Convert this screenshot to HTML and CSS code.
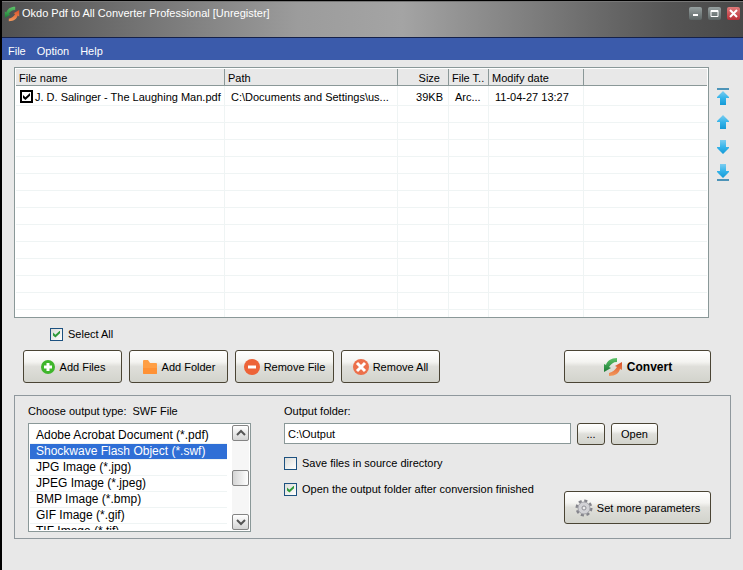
FILE: index.html
```html
<!DOCTYPE html>
<html lang="en">
<head>
  <meta charset="UTF-8">
  <title>Okdo Pdf to All Converter Professional</title>
  <link rel="stylesheet" href="styles.css">
</head>
<body>
  <!-- shared icons -->
  <svg class="defs" width="0" height="0">
    <defs>
      <linearGradient id="green" x1="0" y1="0" x2="0" y2="1">
        <stop offset="0" stop-color="#5cc468"/>
        <stop offset="1" stop-color="#1b7a35"/>
      </linearGradient>
      <linearGradient id="orange" x1="0" y1="0" x2="0" y2="1">
        <stop offset="0" stop-color="#d9502a"/>
        <stop offset="1" stop-color="#f39a5c"/>
      </linearGradient>
      <linearGradient id="blue" x1="0" y1="0" x2="0" y2="1">
        <stop offset="0" stop-color="#7ccdf0"/>
        <stop offset="0.5" stop-color="#35b4ea"/>
        <stop offset="1" stop-color="#159ad6"/>
      </linearGradient>
      <symbol id="swap" viewBox="0 0 20 20">
        <path d="M14 1 C8 1 4 4 3 8 L1 7 L1 15 L8 11 L6 10 C8 7 10 5 14 5 Z" fill="url(#green)"/>
        <path d="M6 19 C13 19 16 16 17 12 L19 13 L19 5 L12 9 L14 10 C12 13 10 15 6 16 Z" fill="url(#orange)"/>
      </symbol>
      <symbol id="up" viewBox="0 0 14 16">
        <path d="M7 1 L13 7 V8 H10 V15 H4 V8 H1 V7 Z" fill="url(#blue)"/>
      </symbol>
      <symbol id="down" viewBox="0 0 14 16">
        <path d="M7 15 L13 9 V8 H10 V1 H4 V8 H1 V9 Z" fill="url(#blue)"/>
      </symbol>
    </defs>
  </svg>

  <div class="window">
    <header class="titlebar">
      <svg class="logo" width="16" height="16"><use href="#swap"/></svg>
      <h1>Okdo Pdf to All Converter Professional [Unregister]</h1>
      <div class="controls">
        <button aria-label="Minimize"><svg width="13" height="13"><path d="M4 8h5" stroke="#fff" stroke-width="2"/></svg></button>
        <button aria-label="Maximize"><svg width="13" height="13"><path d="M3 3.5h7v6h-7z" fill="none" stroke="#fff"/><path d="M3 4h7" stroke="#fff" stroke-width="2"/></svg></button>
        <button class="close" aria-label="Close"><svg width="13" height="13"><path d="M3 3l7 7M10 3l-7 7" stroke="#fff" stroke-width="2"/></svg></button>
      </div>
    </header>

    <nav class="menu">
      <a href="#">File</a>
      <a href="#">Option</a>
      <a href="#">Help</a>
    </nav>

    <main>
      <div class="files">
        <div class="file-list">
          <table>
            <colgroup>
              <col class="c-name"><col class="c-path"><col class="c-size"><col class="c-type"><col class="c-date"><col>
            </colgroup>
            <thead>
              <tr><th>File name</th><th>Path</th><th class="num">Size</th><th>File T..</th><th>Modify date</th><th></th></tr>
            </thead>
            <tbody>
              <tr>
                <td><label class="row-check"><input type="checkbox" checked>J. D. Salinger - The Laughing Man.pdf</label></td>
                <td>C:\Documents and Settings\us...</td>
                <td class="num">39KB</td>
                <td>Arc...</td>
                <td>11-04-27 13:27</td>
                <td></td>
              </tr>
              <tr><td></td><td></td><td></td><td></td><td></td><td></td></tr>
              <tr><td></td><td></td><td></td><td></td><td></td><td></td></tr>
              <tr><td></td><td></td><td></td><td></td><td></td><td></td></tr>
              <tr><td></td><td></td><td></td><td></td><td></td><td></td></tr>
              <tr><td></td><td></td><td></td><td></td><td></td><td></td></tr>
              <tr><td></td><td></td><td></td><td></td><td></td><td></td></tr>
              <tr><td></td><td></td><td></td><td></td><td></td><td></td></tr>
              <tr><td></td><td></td><td></td><td></td><td></td><td></td></tr>
              <tr><td></td><td></td><td></td><td></td><td></td><td></td></tr>
              <tr><td></td><td></td><td></td><td></td><td></td><td></td></tr>
              <tr><td></td><td></td><td></td><td></td><td></td><td></td></tr>
              <tr><td></td><td></td><td></td><td></td><td></td><td></td></tr>
              <tr><td></td><td></td><td></td><td></td><td></td><td></td></tr>
            </tbody>
          </table>
        </div>
        <div class="order">
          <button aria-label="Move to top"><svg width="14" height="18"><path d="M1 1h12" stroke="#4d94b8" stroke-width="2"/><use href="#up" y="2" width="14" height="16"/></svg></button>
          <button aria-label="Move up"><svg width="14" height="18"><use href="#up" y="1" width="14" height="16"/></svg></button>
          <button aria-label="Move down"><svg width="14" height="18"><use href="#down" y="1" width="14" height="16"/></svg></button>
          <button aria-label="Move to bottom"><svg width="14" height="18"><path d="M1 17h12" stroke="#4d94b8" stroke-width="2"/><use href="#down" width="14" height="16"/></svg></button>
        </div>
      </div>

      <label class="check select-all"><input type="checkbox" checked>Select All</label>

      <div class="actions">
        <button class="btn">
          <svg width="16" height="16"><circle cx="8" cy="8" r="7" fill="#3fb62c"/><path d="M8 4v8M4 8h8" stroke="#fff" stroke-width="3"/></svg>
          Add Files
        </button>
        <button class="btn">
          <svg width="16" height="16"><path d="M1 2q0-1 1-1h4l2 3h6q1 0 1 1v9q0 1-1 1h-12q-1 0-1-1z" fill="#ff9f45"/><path d="M1 9h14v5q0 1-1 1h-12q-1 0-1-1z" fill="#ff9236"/></svg>
          Add Folder
        </button>
        <button class="btn">
          <svg width="16" height="16"><circle cx="8" cy="8" r="8" fill="#ed6338"/><path d="M4 8h8" stroke="#fff" stroke-width="3"/></svg>
          Remove File
        </button>
        <button class="btn">
          <svg width="16" height="16"><circle cx="8" cy="8" r="8" fill="#ec704b"/><path d="M4 4l8 8M12 4l-8 8" stroke="#fff" stroke-width="3"/></svg>
          Remove All
        </button>
        <button class="btn wide convert">
          <svg width="20" height="20"><use href="#swap"/></svg>
          Convert
        </button>
      </div>

      <section class="output">
        <div class="types">
          <label for="type">Choose output type: <span>SWF File</span></label>
          <div class="listbox">
            <select id="type" size="7">
              <option>Adobe Acrobat Document (*.pdf)</option>
              <option selected>Shockwave Flash Object (*.swf)</option>
              <option>JPG Image (*.jpg)</option>
              <option>JPEG Image (*.jpeg)</option>
              <option>BMP Image (*.bmp)</option>
              <option>GIF Image (*.gif)</option>
              <option>TIF Image (*.tif)</option>
            </select>
            <div class="scroll">
              <button aria-label="Scroll up"><svg width="12" height="8"><path d="M2 6l4-4l4 4" fill="none" stroke="#555" stroke-width="2"/></svg></button>
              <div class="thumb"></div>
              <button aria-label="Scroll down"><svg width="12" height="8"><path d="M2 2l4 4l4-4" fill="none" stroke="#555" stroke-width="2"/></svg></button>
            </div>
          </div>
        </div>

        <div class="settings">
          <label for="folder">Output folder:</label>
          <div class="folder">
            <input type="text" id="folder" value="C:\Output">
            <button class="btn small dots">...</button>
            <button class="btn small open">Open</button>
          </div>
          <div class="options">
            <div class="checks">
              <label class="check"><input type="checkbox">Save files in source directory</label>
              <label class="check"><input type="checkbox" checked>Open the output folder after conversion finished</label>
            </div>
            <button class="btn wide">
              <svg width="18" height="18" viewBox="0 0 18 18">
                <circle cx="9" cy="9" r="7" fill="none" stroke="#85858c" stroke-width="3" stroke-dasharray="3 2.5"/>
                <circle cx="9" cy="9" r="6" fill="#d2d2d6" stroke="#a5a5ab"/>
                <circle cx="9" cy="9" r="2" fill="#eee" stroke="#8f8f96"/>
              </svg>
              Set more parameters
            </button>
          </div>
        </div>
      </section>
    </main>
  </div>
</body>
</html>
```
FILE: styles.css
```css
* {
  box-sizing: border-box;
}

body {
  margin: 0;
  background: #e8e8e8;
  color: #000;
  font-family: "Liberation Sans", Arial, sans-serif;
  font-size: 11px;
  line-height: 14px;
}

button, input, select {
  font: inherit;
  color: inherit;
}

button {
  padding: 0;
  border: 0;
  background: none;
}

svg {
  display: block;
  flex: none;
}

.defs {
  position: absolute;
}

.window {
  min-height: 100vh;
  border-left: 2px solid #000;
  border-top: 1px solid #000;
}

/* title bar */
.titlebar {
  display: flex;
  align-items: flex-start;
  height: 37px;
  padding: 4px 3px 0 2px;
  border-top: 1px solid #777;
  border-bottom: 1px solid #16224a;
  background: linear-gradient(90deg, #505050, #9c9c9c 40%, #a4a4a4 54%, #555 90%, #484848);
}

.titlebar h1 {
  flex: 1;
  margin: 0 0 0 2px;
  color: #fff;
  font-size: 11px;
  font-weight: normal;
}

.controls {
  display: flex;
  gap: 6px;
  padding-top: 1px;
}

.controls button {
  width: 13px;
  height: 13px;
  border-radius: 2px;
  background: linear-gradient(#96a0a0, #5c6464);
}

.controls .close {
  background: linear-gradient(#e07a7a, #b82e36);
}

/* menu */
.menu {
  display: flex;
  gap: 11px;
  height: 22px;
  padding: 6px 6px 0;
  background: #3b5bab;
}

.menu a {
  color: #fff;
  text-decoration: none;
}

main {
  padding: 7px 12px 0;
}

/* file list */
.files {
  display: flex;
  gap: 7px;
}

.file-list {
  flex: 1;
  height: 251px;
  overflow: hidden;
  padding: 1px;
  border: 1px solid #8a9898;
  background: #fff;
}

table {
  width: 100%;
  table-layout: fixed;
  border-collapse: separate;
  border-spacing: 0;
}

.c-name { width: 209px; }
.c-path { width: 173px; }
.c-size { width: 51px; }
.c-type { width: 40px; }
.c-date { width: 95px; }

th, td {
  height: 17px;
  padding: 0 3px;
  overflow: hidden;
  text-align: left;
  font-weight: normal;
  white-space: nowrap;
}

th {
  padding-top: 1px;
  border-right: 1px solid #8a9898;
  border-bottom: 1px solid #8a9898;
  background: #e8e8e8;
}

td {
  padding: 0 6px;
  border-right: 1px solid #eff4f4;
  border-bottom: 1px solid #eff4f4;
}

tbody tr:first-child td {
  height: 20px;
  padding-top: 2px;
}

th:last-child, td:last-child {
  border-right: 0;
}

th.num {
  padding-right: 8px;
  text-align: right;
}

td.num {
  padding-right: 5px;
  text-align: right;
}

td:first-child {
  padding-left: 4px;
}

.row-check {
  display: flex;
  align-items: center;
  gap: 2px;
}

/* tick boxes */
input[type="checkbox"] {
  appearance: none;
  display: grid;
  place-items: center;
  flex: none;
  width: 13px;
  height: 13px;
  margin: 0;
  border: 1px solid #1c5180;
  background: linear-gradient(135deg, #dcdcd8, #fff);
}

input[type="checkbox"]:checked::after {
  content: "";
  width: 7px;
  height: 7px;
  background: #2f9a3a;
  clip-path: polygon(0 30%, 35% 60%, 100% 0, 100% 40%, 35% 100%, 0 70%);
}

.row-check input[type="checkbox"] {
  border: 2px solid #000;
  background: #fff;
}

.row-check input[type="checkbox"]:checked::after {
  background: #000;
}

.check {
  display: flex;
  align-items: center;
  gap: 5px;
}

.select-all {
  width: max-content;
  margin: 9px 0 0 36px;
}

/* move buttons */
.order {
  display: flex;
  flex-direction: column;
  gap: 7px;
  padding: 21px 1px 0 0;
}

/* buttons */
.btn {
  display: flex;
  align-items: center;
  justify-content: center;
  gap: 4px;
  width: 99px;
  height: 33px;
  border: 1px solid #4a4434;
  border-radius: 3px;
  background: linear-gradient(#fff, #f4f4f1 35%, #dfdfda 50%, #d2d3cc);
}

.wide {
  width: 147px;
}

.small {
  height: 22px;
}

.dots {
  width: 28px;
}

.open {
  width: 47px;
}

.actions {
  display: flex;
  gap: 7px;
  padding: 9px 20px 12px 9px;
}

.convert {
  margin-left: auto;
  font-size: 12px;
  font-weight: bold;
}

/* output panel */
.output {
  display: flex;
  gap: 33px;
  padding: 8px 19px 15px 13px;
  border: 1px solid #8f989d;
  padding-bottom: 6px;
}

.types label span {
  margin-left: 3px;
}

.listbox {
  display: flex;
  gap: 5px;
  width: 223px;
  height: 109px;
  margin-top: 5px;
  padding: 1px;
  border: 1px solid #8a9898;
  background: #fff;
}

.listbox select {
  flex: 1;
  height: 105px;
  padding: 3px 0 0;
  border: 0;
  outline: 0;
  overflow: hidden;
  background: #fff;
  font-size: 12px;
}

.listbox option {
  height: 16px;
  min-height: 16px;
  padding: 0 6px;
  border-bottom: 1px solid #eff4f4;
  line-height: 15px;
}

.listbox option:checked {
  background: #2f6fd6 linear-gradient(#2f6fd6, #2f6fd6);
  color: #fff;
}

.scroll {
  display: flex;
  flex-direction: column;
  justify-content: space-between;
  width: 17px;
  background: #f6f6f6;
}

.scroll button, .thumb {
  display: grid;
  place-items: center;
  width: 17px;
  height: 16px;
  border: 1px solid #848484;
  border-radius: 2px;
  background: linear-gradient(#fff, #d4d4d4);
}

.scroll .thumb {
  background: linear-gradient(90deg, #d4d4d4, #fff);
}

.settings {
  flex: 1;
}

.folder {
  display: flex;
  gap: 6px;
  margin: 5px 53px 0 0;
}

.folder input {
  flex: 1;
  min-width: 0;
  height: 21px;
  padding: 0 3px;
  border: 1px solid #8a9898;
  background: #fff;
}

.options {
  display: flex;
  justify-content: space-between;
}

.checks {
  display: grid;
  align-content: start;
  gap: 12px;
  padding-top: 11px;
}

.options .btn {
  margin-top: 46px;
}
```
